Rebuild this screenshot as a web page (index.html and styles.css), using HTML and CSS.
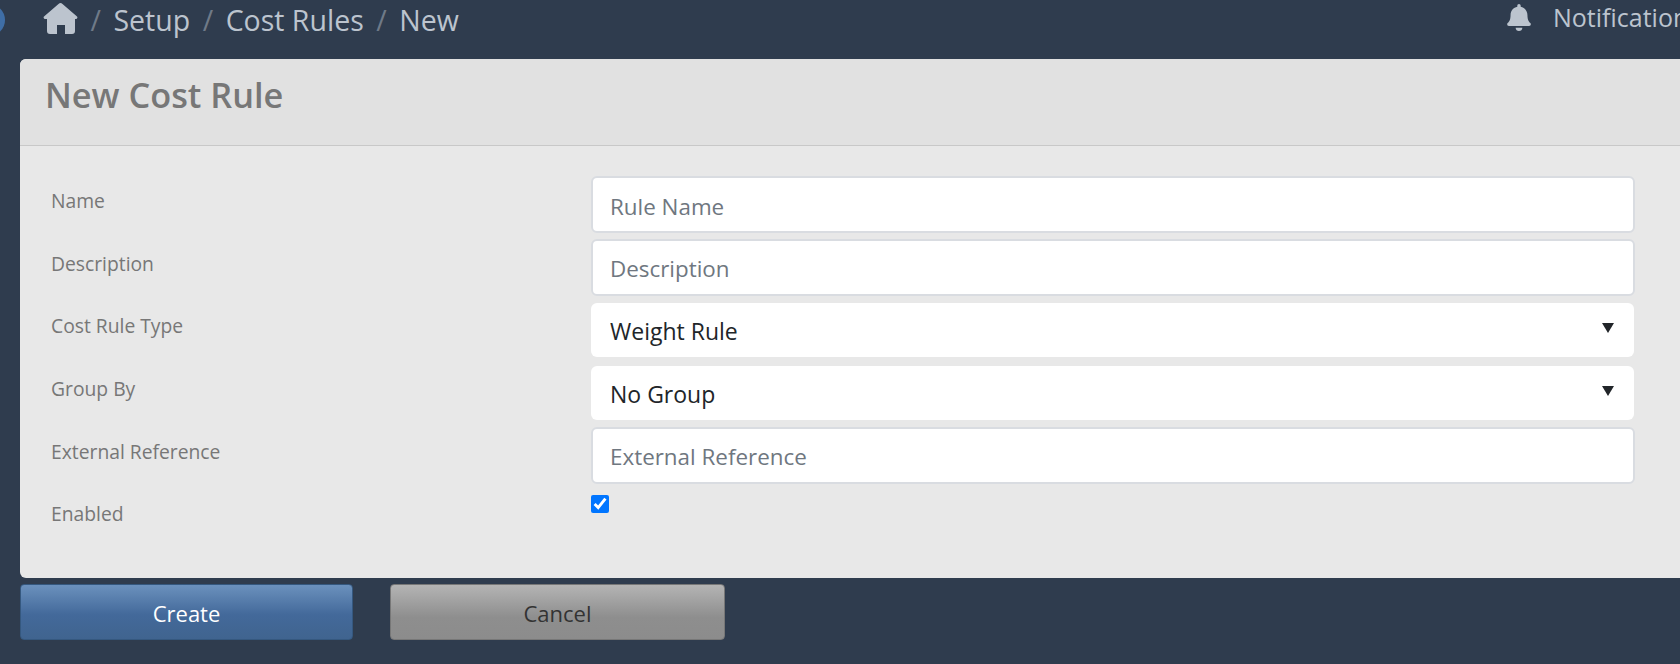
FILE: index.html
```html
<!DOCTYPE html>
<html lang="en">
<head>
<meta charset="utf-8">
<title>New Cost Rule</title>
<link rel="stylesheet" href="styles.css">
</head>
<body>
<span class="avatar"></span>
<header class="topbar">
  <nav class="crumbs">
    <svg class="home" viewBox="0 0 35 31"><path d="M15.5 1a3 3 0 0 1 4 0L34 13.5a1.5 1.5 0 0 1-1 2.5H32V28a3 3 0 0 1-3 3H22V22H14V31H7a3 3 0 0 1-3-3V16H2a1.5 1.5 0 0 1-1-2.5Z"/></svg>
    <span class="sep">/</span><span>Setup</span>
    <span class="sep">/</span><span>Cost Rules</span>
    <span class="sep">/</span><span>New</span>
  </nav>
  <div class="notify">
    <svg class="bell" viewBox="0 0 448 512"><path d="M224 512c35.32 0 63.97-28.65 63.97-64H160.03c0 35.35 28.65 64 63.97 64zm215.39-149.71c-19.32-20.76-55.47-51.99-55.47-154.29 0-77.7-54.48-139.9-127.94-155.16V32c0-17.67-14.32-32-31.98-32s-31.98 14.33-31.98 32v20.84C118.56 68.1 64.08 130.3 64.08 208c0 102.3-36.15 133.53-55.47 154.29-6 6.45-8.66 14.16-8.61 21.71.11 16.4 12.98 32 32.1 32h383.8c19.12 0 32-15.6 32.1-32 .05-7.55-2.61-15.27-8.61-21.71z"/></svg>
    <span class="notify-text">Notifications</span>
  </div>
</header>
<main class="card">
  <div class="card-head"><h1>New Cost Rule</h1></div>
  <form class="card-body">
    <div class="row"><label class="lbl">Name</label><input class="ctl" placeholder="Rule Name"></div>
    <div class="row"><label class="lbl">Description</label><input class="ctl" placeholder="Description"></div>
    <div class="row"><label class="lbl">Cost Rule Type</label><div class="sel"><select><option>Weight Rule</option></select></div></div>
    <div class="row"><label class="lbl">Group By</label><div class="sel"><select><option>No Group</option></select></div></div>
    <div class="row"><label class="lbl">External Reference</label><input class="ctl" placeholder="External Reference"></div>
    <div class="row check-row"><label class="lbl">Enabled</label><input class="chk" type="checkbox" checked></div>
  </form>
</main>
<div class="actions">
  <button class="btn primary" type="button">Create</button>
  <button class="btn secondary" type="button">Cancel</button>
</div>
</body>
</html>
```
FILE: styles.css
```css
* { box-sizing: border-box; }
html, body { height: 100%; }
body {
  margin: 0;
  background: #2f3c4e;
  font-family: "Open Sans", "Noto Sans", sans-serif;
  overflow: hidden;
  width: 1680px;
  height: 664px;
  position: relative;
}
.avatar {
  position: absolute;
  left: -27px;
  top: 4px;
  width: 32px;
  height: 32px;
  border-radius: 50%;
  background: #3f6ea6;
}
.topbar {
  height: 59px;
  display: flex;
  justify-content: space-between;
  align-items: flex-start;
  color: #bcc4ce;
}
.crumbs {
  display: flex;
  align-items: center;
  height: 40px;
  padding-left: 43px;
  font-size: 28.5px;
  gap: 12.5px;
}
.home { width: 35px; height: 31px; fill: #bcc4ce; margin-top: -3px; }
.sep { color: #6f7a88; }
.notify {
  display: flex;
  align-items: center;
  height: 34px;
  width: 174px;
  flex: none;
  gap: 22px;
  padding-left: 1px;
  white-space: nowrap;
  overflow: hidden;
  font-size: 25px;
}
.bell { width: 24px; height: 27px; fill: #bcc4ce; flex: none; }
.card {
  margin-left: 20px;
  width: 1680px;
  height: 519px;
  background: #e8e8e8;
  border-radius: 6px 0 0 6px;
}
.card-head {
  height: 87px;
  background: #e1e1e1;
  border-bottom: 1px solid #c8c8c8;
  border-radius: 6px 0 0 0;
  padding: 15px 0 0 25px;
}
h1 {
  margin: 0;
  font-size: 34.3px;
  font-weight: 600;
  line-height: 42px;
  color: #777;
}
.card-body {
  padding: 30px 0 0 31px;
}
.row {
  display: flex;
  align-items: flex-start;
  height: 57px;
  margin-bottom: 5.7px;
}
.lbl {
  width: 541px;
  flex: none;
  padding-top: 13px;
  font-size: 19.3px;
  line-height: 24px;
  color: #777;
}
.ctl, .sel select {
  font-family: inherit;
  color: #212529;
  background: #fff;
  border-radius: 6px;
}
.ctl {
  width: 1044px;
  height: 57px;
  margin-left: -1px;
  padding: 3px 18px 0 17px;
  font-size: 22.4px;
  border: 2px solid #d9dce1;
}
.ctl::placeholder { color: #6f7780; opacity: 1; }
.sel { position: relative; height: 57px; display: flex; align-items: center; }
.sel select {
  width: 1043px;
  height: 54px;
  margin-left: -1px;
  padding: 3px 18px 0 19px;
  font-size: 23px;
  border: 0;
  appearance: none;
  -webkit-appearance: none;
}
.sel::after {
  content: "";
  position: absolute;
  right: 20px;
  top: 22px;
  border-left: 6px solid transparent;
  border-right: 6px solid transparent;
  border-top: 10px solid #212529;
}
.chk {
  width: 18px;
  height: 18px;
  margin: 6px 0 0 -1px;
  accent-color: #0075ff;
}
.check-row .lbl { padding-top: 13px; }
.actions {
  display: flex;
  gap: 37px;
  margin: 6px 0 0 20px;
}
.btn {
  height: 56px;
  width: 333px;
  padding-top: 2px;
  border-radius: 4px;
  font-family: inherit;
  font-size: 22px;
}
.primary {
  color: #fff;
  border: 1px solid #35587f;
  background: linear-gradient(#6b91bd, #43699a 55%, #40648f);
}
.secondary {
  width: 335px;
  color: #333;
  border: 1px solid #777;
  background: linear-gradient(#b4b4b4, #8e8e8e 60%, #8c8c8c);
}
```
